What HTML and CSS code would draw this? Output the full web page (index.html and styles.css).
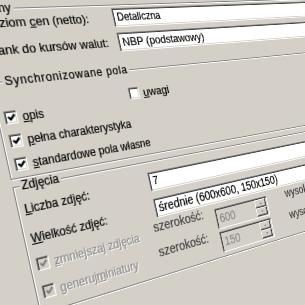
FILE: index.html
```html
<!DOCTYPE html>
<html lang="pl">
<head>
    <meta charset="UTF-8">
    <title>Ustawienia synchronizacji</title>
    <link rel="stylesheet" href="styles.css">
</head>
<body>
    <div class="dlg">
        <div class="sep"><span>Ceny</span></div>
        <div class="row first">
            <label class="lbl">Poziom <u>c</u>en (netto):</label>
            <div class="edit">Detaliczna</div>
        </div>
        <div class="row">
            <label class="lbl"><u>B</u>ank do kursów walut:</label>
            <div class="edit">NBP (podstawowy)</div>
        </div>

        <div class="grp sync">
            <div class="cap">Synchronizowane pola</div>
            <div class="checks">
                <div class="chk"><span class="box"><svg viewBox="0 0 7 7"><path d="M0.6 2.6 L2.6 4.8 L6.4 0.9"/></svg></span><u>o</u>pis</div>
                <div class="chk uwagi"><span class="box"></span><u>u</u>wagi</div>
                <div class="chk wide"><span class="box"><svg viewBox="0 0 7 7"><path d="M0.6 2.6 L2.6 4.8 L6.4 0.9"/></svg></span><u>p</u>ełna charakterystyka</div>
                <div class="chk wide"><span class="box"><svg viewBox="0 0 7 7"><path d="M0.6 2.6 L2.6 4.8 L6.4 0.9"/></svg></span><u>s</u>tandardowe pola własne</div>
            </div>
        </div>

        <div class="grp foto">
            <div class="cap">Zdjęcia</div>
            <div class="frow first">
                <label class="flbl"><u>L</u>iczba zdjęć:</label>
                <div class="edit">7</div>
            </div>
            <div class="frow second">
                <label class="flbl"><u>W</u>ielkość zdjęć:</label>
                <div class="edit">średnie (600x600, 150x150)</div>
            </div>
            <div class="frow">
                <div class="chk flbl off"><span class="box"><svg viewBox="0 0 7 7"><path d="M0.6 2.6 L2.6 4.8 L6.4 0.9"/></svg></span><u>z</u>mniejszaj zdjęcia</div>
                <label class="slbl">szerokość:</label>
                <div class="spin"><span>600</span><div class="btns"><i class="up"></i><i class="dn"></i></div></div>
                <label class="slbl">wysokość:</label>
                <div class="spin"><span>600</span><div class="btns"><i class="up"></i><i class="dn"></i></div></div>
            </div>
            <div class="frow">
                <div class="chk flbl off"><span class="box"><svg viewBox="0 0 7 7"><path d="M0.6 2.6 L2.6 4.8 L6.4 0.9"/></svg></span>generuj <u>m</u>iniatury</div>
                <label class="slbl">szerokość:</label>
                <div class="spin"><span>150</span><div class="btns"><i class="up"></i><i class="dn"></i></div></div>
                <label class="slbl">wysokość:</label>
                <div class="spin"><span>150</span><div class="btns"><i class="up"></i><i class="dn"></i></div></div>
            </div>
        </div>
    </div>
</body>
</html>
```

FILE: styles.css
```css
html, body {
    margin: 0;
    height: 100%;
    overflow: hidden;
}
body {
    background: #d4d0c8;
    font-family: "Liberation Sans", Arial, sans-serif;
    font-size: 12px;
    color: #000;
    -webkit-text-stroke: 0.2px currentColor;
}
/* the whole dialog is drawn flat and then tilted like the screenshot */
.dlg {
    width: 470px;
    padding: 2px 0 0 12px;
    transform-origin: 0 0;
    transform: matrix3d(1, -0.0238, 0, 0.000883, 0.22, 1, 0, 0, 0, 0, 1, 0, 0, 0, 0, 1) translateX(-40px);
}
u {
    text-decoration: underline;
    text-underline-offset: 1px;
}
.sep {
    display: flex;
    align-items: center;
    height: 13px;
    line-height: 13px;
    margin-left: 9px;
}
.sep span {
    padding-right: 3px;
}
.sep::after {
    content: "";
    flex: 1;
    border-top: 1px solid #808080;
    border-bottom: 1px solid #fff;
}
.row {
    display: flex;
    align-items: center;
    height: 21px;
    margin: 6px 0 0 6px;
}
.row.first {
    margin-top: -3px;
}
.lbl {
    flex: 0 0 142px;
    font-size: 13px;
    white-space: nowrap;
}
.edit {
    flex: 0 0 auto;
    width: 300px;
    height: 21px;
    box-sizing: border-box;
    padding: 0 4px;
    line-height: 19px;
    white-space: nowrap;
    background: #fff;
    border: 1px solid;
    border-color: #808080 #fff #fff #808080;
    box-shadow: inset 1px 1px #404040, inset -1px -1px #d4d0c8;
}
.row + .row .edit {
    font-size: 13px;
}
.grp {
    width: 456px;
    border: 1px solid #808080;
    box-shadow: inset 1px 1px #fff, 1px 1px #fff;
}
.cap {
    display: table;
    margin: -7px 0 0 12px;
    padding: 0 2px;
    line-height: 13px;
    background: #d4d0c8;
}
.sync {
    margin-top: 20px;
    padding-bottom: 6px;
}
.sync .cap {
    letter-spacing: 0.8px;
}
.checks {
    display: grid;
    grid-template-columns: 140px auto;
    row-gap: 10px;
    margin: 22px 0 0 6px;
}
.chk {
    display: flex;
    align-items: center;
    height: 13px;
    white-space: nowrap;
}
.chk.wide {
    grid-column: 1 / 3;
}
.chk.uwagi {
    margin-top: -9px;
    font-size: 13px;
}
.box {
    flex: 0 0 13px;
    width: 13px;
    height: 13px;
    box-sizing: border-box;
    margin-right: 5px;
    display: flex;
    align-items: center;
    justify-content: center;
    background: #fff;
    border: 1px solid;
    border-color: #808080 #fff #fff #808080;
    box-shadow: inset 1px 1px #404040, inset -1px -1px #d4d0c8;
}
.box svg {
    width: 8px;
    height: 8px;
    fill: none;
    stroke: #000;
    stroke-width: 1.9;
}
.off {
    color: #8c8c8c;
    text-shadow: 1px 1px 0 #fff;
}
.off .box {
    background: #d4d0c8;
}
.off .box svg {
    stroke: #808080;
}
.foto {
    margin-top: 7px;
    padding-bottom: 8px;
}
.foto .cap {
    margin-left: 6px;
}
.frow {
    display: flex;
    align-items: center;
    height: 21px;
    margin: 5px 0 0 6px;
}
.frow.first {
    margin-top: 5px;
}
.frow.second {
    margin-top: 8px;
}
.frow:last-child {
    margin-top: 6px;
}
.frow.second .edit {
    font-size: 14px;
}
.flbl {
    flex: 0 0 141px;
    white-space: nowrap;
}
.frow .chk.flbl {
    flex-basis: 134px;
    font-size: 12px;
}
/* the right-hand labels sit a little higher than the check boxes */
.slbl {
    flex: 0 0 83px;
    margin-bottom: 14px;
    font-size: 14px;
    color: #404040;
}
.spin {
    flex: 0 0 80px;
    height: 24px;
    box-sizing: border-box;
    display: flex;
    align-items: center;
    justify-content: space-between;
    padding: 2px 2px 2px 4px;
    margin: 4px 30px 0 0;
    font-size: 14px;
    color: #8c8c8c;
    background: #d4d0c8;
    border: 1px solid;
    border-color: #808080 #fff #fff #808080;
    box-shadow: inset 1px 1px #404040, inset -1px -1px #d4d0c8;
}
.btns {
    display: flex;
    flex-direction: column;
    width: 17px;
    height: 20px;
}
.btns i {
    flex: 1;
    display: flex;
    align-items: center;
    justify-content: center;
    border: 1px solid;
    border-color: #fff #404040 #404040 #fff;
    box-shadow: inset -1px -1px #808080;
}
.btns i::after {
    content: "";
    border: 2px solid transparent;
}
.btns .up::after {
    border-bottom-color: #808080;
    margin-top: -2px;
}
.btns .dn::after {
    border-top-color: #808080;
    margin-bottom: -2px;
}
```
